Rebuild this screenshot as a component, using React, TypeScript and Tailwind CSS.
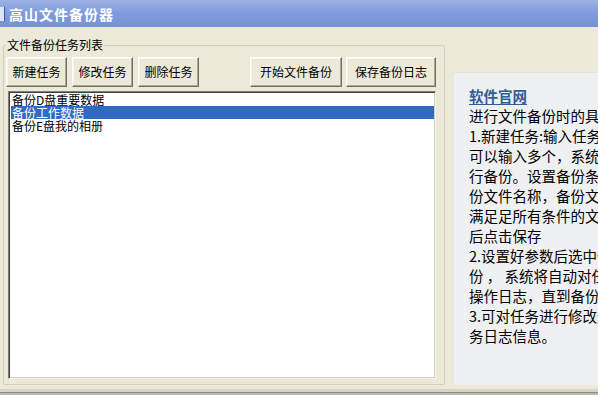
import React from "react";

const font = { fontFamily: '"Noto Sans CJK SC", "Noto Sans", sans-serif' };

function Btn({ children, w }: { children: React.ReactNode; w: string }) {
  return (
    <div
      className={`${w} h-[30px] flex items-center justify-center text-[12px] text-black bg-[#ece9d8] border border-t-white border-l-white border-r-[#716f64] border-b-[#716f64] shadow-[inset_-1px_-1px_0_#aca899,inset_1px_1px_0_#f5f4ee]`}
    >
      {children}
    </div>
  );
}

const lines = [
  "进行文件备份时的具体步骤如下：",
  "1.新建任务:输入任务名称，备份源",
  "可以输入多个，系统将对所有源进",
  "行备份。设置备份条件，包括备",
  "份文件名称，备份文件类型等，",
  "满足足所有条件的文件将被备份，",
  "后点击保存",
  "2.设置好参数后选中任务开始备",
  "份 ， 系统将自动对任务进行备份",
  "操作日志，直到备份完成。",
  "3.可对任务进行修改删除保存任",
  "务日志信息。",
];

export default function App() {
  return (
    <div className="w-[598px] h-[395px] overflow-hidden bg-[#ece9d8] flex flex-col" style={font}>
      {/* title bar */}
      <div className="h-[27px] shrink-0 flex items-center bg-gradient-to-b from-[#9db2e6] via-[#7f9bdc] to-[#7592d6]">
        <div className="w-[5px] h-[14px] ml-0 mr-[4px] bg-[#dfe6f5] border-r border-[#3a5aa8]" />
        <span className="text-white font-bold text-[14px] tracking-[1px] leading-none">高山文件备份器</span>
      </div>
      <div className="flex flex-1">
        {/* group box */}
        <fieldset className="ml-[3px] mt-[11px] w-[442px] h-[347px] border border-[#d0d0bf] rounded-[2px] px-[2px] shrink-0">
          <legend className="ml-0 px-[1px] text-[12px] leading-[14px] text-black">文件备份任务列表</legend>
          <div className="flex items-center mt-[5px]">
            <Btn w="w-[61px]">新建任务</Btn>
            <div className="w-[5px]" />
            <Btn w="w-[61px]">修改任务</Btn>
            <div className="w-[5px]" />
            <Btn w="w-[61px]">删除任务</Btn>
            <div className="w-[51px]" />
            <Btn w="w-[92px]">开始文件备份</Btn>
            <div className="w-[4px]" />
            <Btn w="w-[90px]">保存备份日志</Btn>
          </div>
          <div className="mt-[4px] ml-[2px] w-[428px] h-[288px] bg-white border border-t-[#7f7d74] border-l-[#7f7d74] border-r-[#f4f3ee] border-b-[#f4f3ee] shadow-[inset_1px_1px_0_#404040,inset_-1px_-1px_0_#d4d0c8] pt-[1px] pl-[2px] pr-[1px] text-[12px] leading-[13px] text-black">
            <div className="whitespace-nowrap pl-[1px] h-[13px] overflow-visible">备份D盘重要数据</div>
            <div className="whitespace-nowrap pl-[1px] h-[13px] bg-[#316ac5] text-white">备份工作数据</div>
            <div className="whitespace-nowrap pl-[1px] h-[13px]">备份E盘我的相册</div>
          </div>
        </fieldset>
        {/* right panel */}
        <div className="ml-[8px] mt-[45px] h-[313px] w-[200px] shrink-0 bg-[#eff0f1] border-l border-t border-[#e4e3dc] pl-[15px] pt-[13px] text-[14.5px] leading-[20px] text-black">
          <div className="font-bold text-[#2f5d98] underline underline-offset-2 leading-[20px]">软件官网</div>
          {lines.map((l, i) => (
            <div key={i} className="whitespace-nowrap">{l}</div>
          ))}
        </div>
      </div>
      <div className="h-[3px] shrink-0 bg-[#d8d5c4]" />
      <div className="h-[1px] shrink-0 bg-[#8f8d82]" />
      <div className="h-[2px] shrink-0 bg-[#b9b8ae]" />
    </div>
  );
}
